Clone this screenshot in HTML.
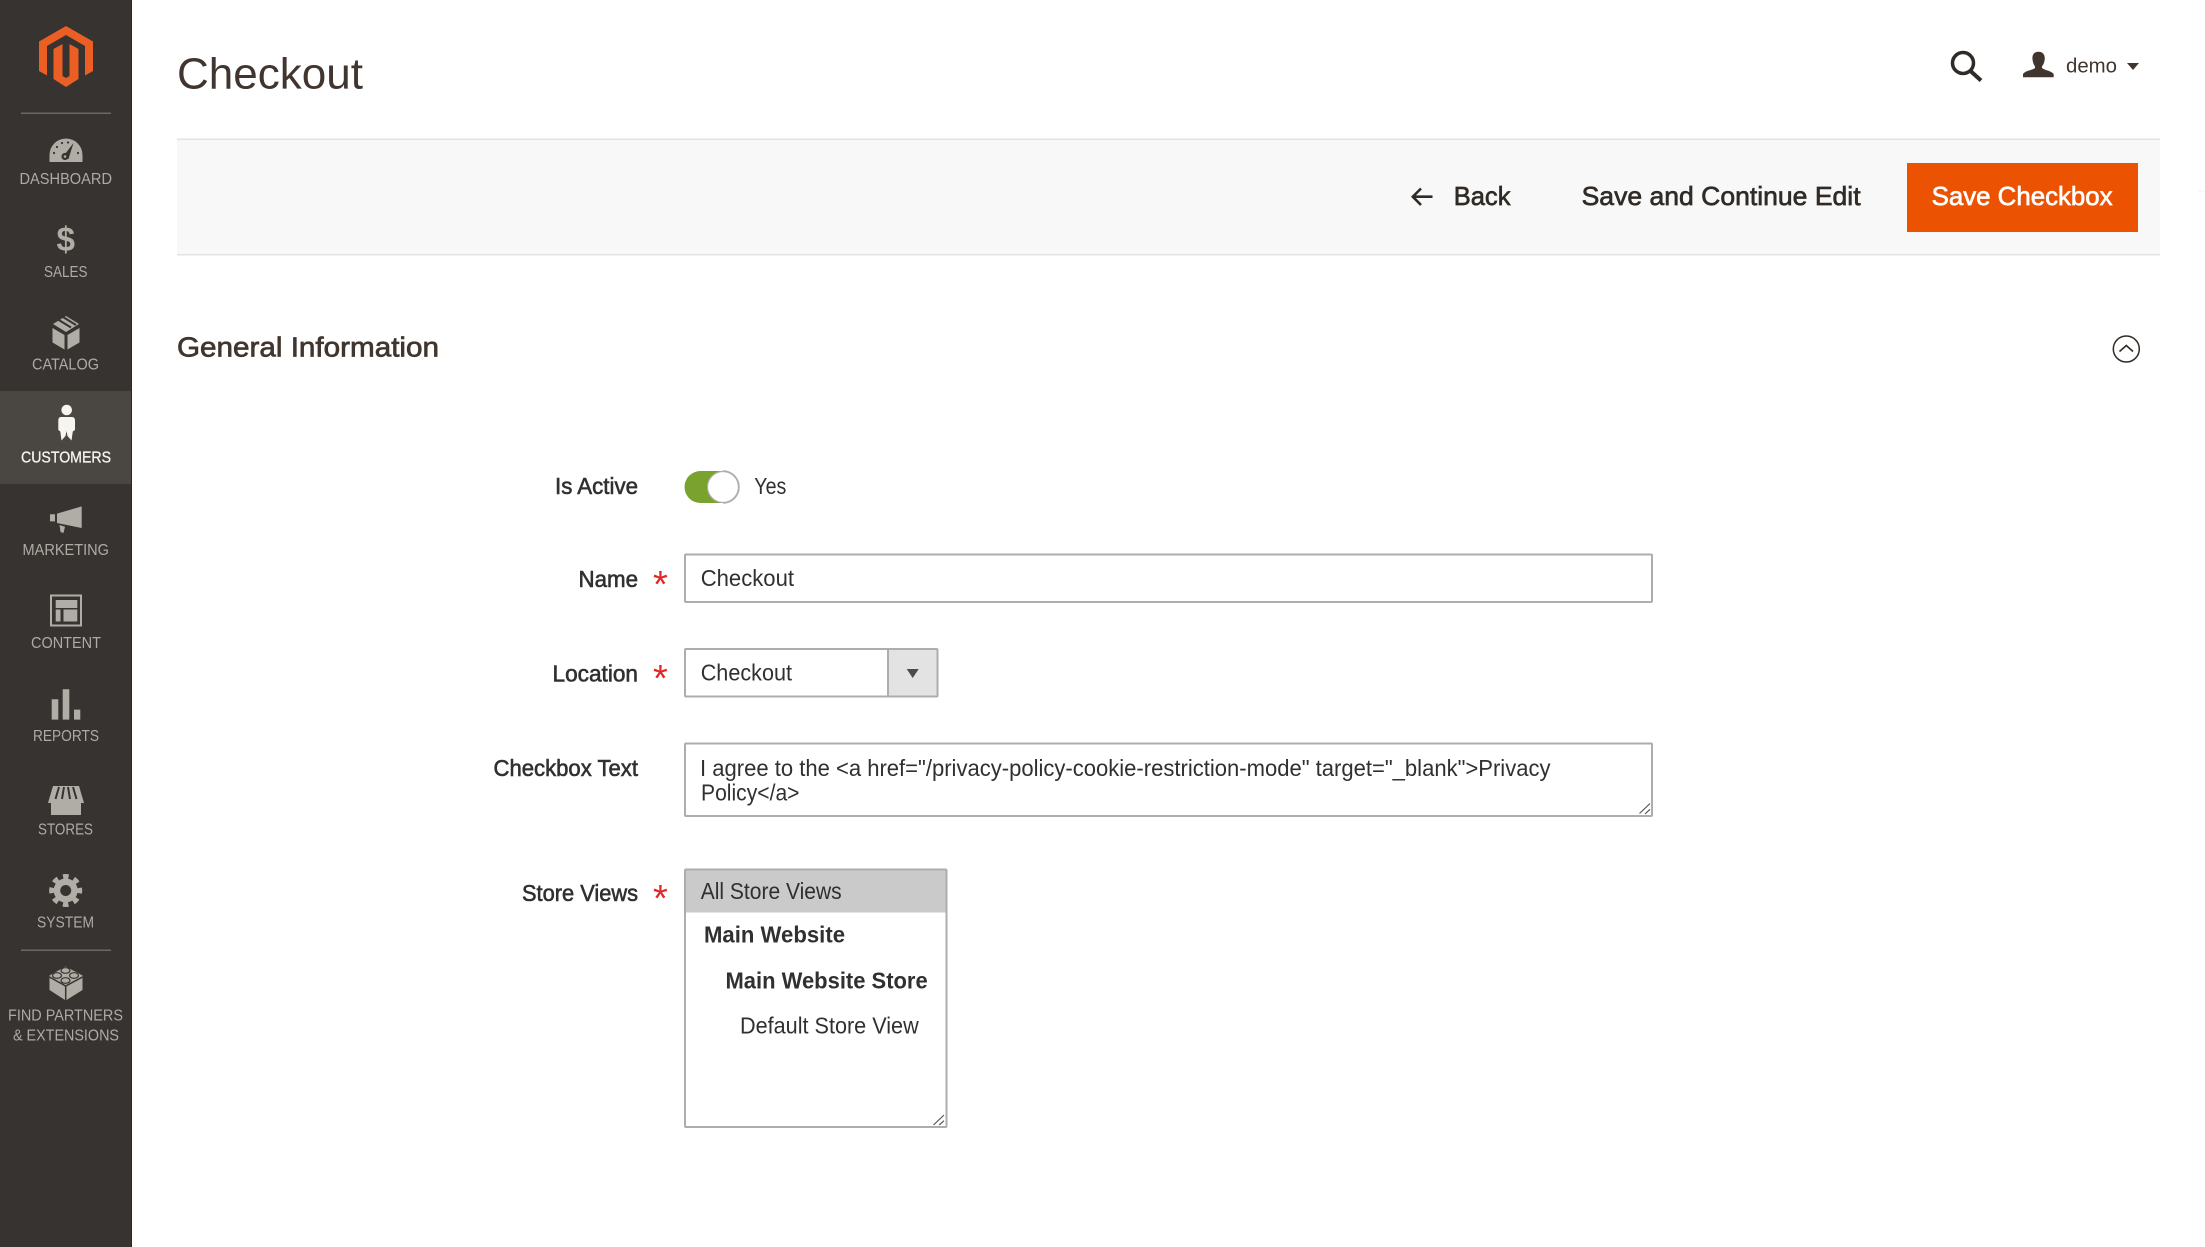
<!DOCTYPE html>
<html lang="en"><head><meta charset="utf-8"><title>Checkout</title>
<style>
html,body{margin:0;padding:0;background:#fff;width:2205px;height:1247px;overflow:hidden}
svg{display:block}
text{font-family:"Liberation Sans",sans-serif;white-space:pre}
.nav{font-size:15.5px;fill:#aeaaa4}
.lab{font-size:23px;fill:#303030;stroke:#303030;stroke-width:.6px}
.val{font-size:23px;fill:#303030}
.b{font-size:23px;font-weight:bold;fill:#303030}
.star{font-size:38px;fill:#e22626}
.tb{font-size:26px;fill:#302b26;stroke:#302b26;stroke-width:.65px}
.ic{fill:#b0ada6}
</style></head><body>
<svg width="2205" height="1247" viewBox="0 0 2205 1247" xmlns="http://www.w3.org/2000/svg">
<rect width="2205" height="1247" fill="#fff"/>
<!-- sidebar -->
<rect width="131" height="1247" fill="#373330"/>
<rect x="131" width="1" height="1247" fill="#2b2825"/>
<rect y="391" width="131" height="93" fill="#4a4642"/>
<path fill="#eb5f24" d="M66 26 L93 41.5 V71 L85 75.5 V46 L66 35 L47 46 V75.5 L39 71 V41.5 Z"/>
<path fill="#eb5f24" d="M53.5 49 L62.5 44 V76 L66 78 L69.5 76 V44 L78.5 49 V79 L66 87 L53.5 79 Z"/>
<rect x="21" y="112.5" width="90" height="1.5" fill="#6b6763"/>
<rect x="21" y="949.5" width="90" height="1.5" fill="#6b6763"/>
<!-- dashboard icon -->
<path class="ic" d="M49.5 162 V155 A16.5 16.5 0 0 1 82.5 155 V162 Z"/>
<path d="M62 158 L73.5 143 L68.5 159 Z" fill="#373330"/><circle cx="65" cy="156.5" r="3.6" fill="#373330"/><circle cx="65" cy="156.5" r="1.3" fill="#b0ada6"/>
<g fill="#373330"><circle cx="54" cy="153" r="1.1"/><circle cx="57" cy="147" r="1.1"/><circle cx="62" cy="143" r="1.1"/><circle cx="68" cy="142.5" r="1.1"/><circle cx="78" cy="153" r="1.1"/></g>
<!-- sales -->
<text x="56.5" y="251" font-size="34" font-weight="bold" fill="#b0ada6" textLength="18.5" lengthAdjust="spacingAndGlyphs">$</text>
<!-- catalog -->
<path class="ic" d="M52.5 328 L64.5 335 V349.5 L52.5 342.5 Z M67.5 335 L79.5 328 V342.5 L67.5 349.5 Z M66 316 L79 324 L66 332 L53 324 Z"/>
<path d="M58 319.5 L71 327.5 M63 317 L76 325" stroke="#373330" stroke-width="2" fill="none"/>
<!-- customers -->
<circle cx="66.7" cy="410" r="5.3" fill="#f7f5f0"/>
<path fill="#f7f5f0" d="M61 417 H72 Q75 417 75 420.5 V430 L72.8 431.5 L71.5 440.5 L67.5 436 L66.5 431 L65.5 436 L61.5 440.5 L60.3 431.5 L58.3 430 V420.5 Q58.3 417 61 417 Z"/>
<!-- marketing -->
<path class="ic" d="M81.7 506.4 V528 L57 523 V513.6 Z M50 514.3 H55 V521.4 H50 Z M59.5 525 L65 526.8 L63.5 533 L60.5 532 Z"/>
<!-- content -->
<rect x="51" y="595.5" width="30" height="30" fill="none" stroke="#b0ada6" stroke-width="2"/>
<path class="ic" d="M55.7 600 H77.3 V608 H55.7 Z M55.7 609.5 H60.5 V621.5 H55.7 Z M63.5 609.5 H77.3 V621.5 H63.5 Z"/>
<!-- reports -->
<path class="ic" d="M51.7 699.3 H58.3 V719.6 H51.7 Z M62.7 689.3 H69.3 V719.6 H62.7 Z M74 709.6 H80.3 V719.6 H74 Z"/>
<!-- stores -->
<path class="ic" d="M53 786 H79 L84 803 H48 Z M51 803 H81 V815 H51 Z"/>
<path d="M59 787 L55.5 799 M64 787 L62 799 M68 787 L70 799 M73 787 L76.5 799" stroke="#373330" stroke-width="2" fill="none"/>
<!-- system -->
<circle cx="65.7" cy="890.5" r="12" class="ic"/>
<circle cx="65.7" cy="890.5" r="14" fill="none" stroke="#b0ada6" stroke-width="5" stroke-dasharray="5.5 5.5" stroke-dashoffset="2.75"/>
<circle cx="65.7" cy="890.5" r="5.5" fill="#373330"/>
<!-- lego -->
<path class="ic" d="M65.5 966.5 L82.5 975.5 V990 L66.5 1000 H65 L49.5 990 V975.5 Z"/>
<path d="M49.5 977 L65.7 986 L82.5 977 M65.7 986 V1000" stroke="#373330" stroke-width="1.5" fill="none"/>
<g fill="#b0ada6" stroke="#373330" stroke-width="1.2"><ellipse cx="65.5" cy="970.5" rx="4.5" ry="2.8"/><ellipse cx="57" cy="975.5" rx="4.5" ry="2.8"/><ellipse cx="74" cy="975.5" rx="4.5" ry="2.8"/><ellipse cx="65.5" cy="980.5" rx="4.5" ry="2.8"/></g>
<!-- nav labels -->
<text class="nav" x="19.5" y="184" textLength="92.5" lengthAdjust="spacingAndGlyphs">DASHBOARD</text>
<text class="nav" x="44" y="277" textLength="43.5" lengthAdjust="spacingAndGlyphs">SALES</text>
<text class="nav" x="32" y="369.5" textLength="67" lengthAdjust="spacingAndGlyphs">CATALOG</text>
<text class="nav" x="21" y="462.5" textLength="90" lengthAdjust="spacingAndGlyphs" style="fill:#f7f5f0;stroke:#f7f5f0;stroke-width:.3px">CUSTOMERS</text>
<text class="nav" x="22.5" y="555" textLength="86.5" lengthAdjust="spacingAndGlyphs">MARKETING</text>
<text class="nav" x="31" y="648" textLength="70" lengthAdjust="spacingAndGlyphs">CONTENT</text>
<text class="nav" x="33" y="741" textLength="66" lengthAdjust="spacingAndGlyphs">REPORTS</text>
<text class="nav" x="38" y="834.5" textLength="55" lengthAdjust="spacingAndGlyphs">STORES</text>
<text class="nav" x="37" y="927.5" textLength="57" lengthAdjust="spacingAndGlyphs">SYSTEM</text>
<text class="nav" x="8" y="1020.5" textLength="115" lengthAdjust="spacingAndGlyphs">FIND PARTNERS</text>
<text class="nav" x="13" y="1040.5" textLength="106" lengthAdjust="spacingAndGlyphs">&amp; EXTENSIONS</text>
<!-- header -->
<text x="177" y="88.5" font-size="44" fill="#41362f" textLength="186" lengthAdjust="spacingAndGlyphs">Checkout</text>
<circle cx="1963" cy="63" r="10.5" fill="none" stroke="#302b26" stroke-width="3.5"/>
<path d="M1970.5 71 L1981 80.5" stroke="#302b26" stroke-width="4" fill="none"/>
<path fill="#41362f" d="M2038.5 51.7 C2033.5 51.7 2032 55.5 2032.5 59.5 C2033 63 2034 65 2035 66.5 V68 C2032 70.5 2025.5 70.5 2023 74 V77.3 H2053.7 V74 C2051 70.5 2045 70.5 2042 68 V66.5 C2043 65 2044.3 63 2044.7 59.5 C2045.2 55.5 2043.5 51.7 2038.5 51.7 Z"/>
<text x="2066" y="72.7" font-size="20" fill="#41362f" textLength="51" lengthAdjust="spacingAndGlyphs">demo</text>
<path fill="#41362f" d="M2127 63 H2139 L2133 70 Z"/>
<!-- toolbar -->
<rect x="177" y="139" width="1983" height="116" fill="#f8f8f8"/>
<rect x="177" y="138.5" width="1983" height="1.5" fill="#e3e3e3"/>
<rect x="177" y="254" width="1983" height="1.5" fill="#e3e3e3"/>
<rect x="2198" y="190.5" width="7" height="1" fill="#f0f0f0"/>
<path d="M1432.5 196.7 H1413 M1421 188.5 L1412.8 196.7 L1421 205" stroke="#302b26" stroke-width="2.6" fill="none"/>
<text class="tb" x="1453.7" y="205" textLength="56.8" lengthAdjust="spacingAndGlyphs">Back</text>
<text class="tb" x="1581.6" y="205" textLength="279" lengthAdjust="spacingAndGlyphs">Save and Continue Edit</text>
<rect x="1907" y="163" width="231" height="69" fill="#eb5202"/>
<text class="tb" x="1931.6" y="205" textLength="181" lengthAdjust="spacingAndGlyphs" style="fill:#fff;stroke:#fff">Save Checkbox</text>
<!-- section -->
<text x="177" y="356.5" font-size="27.5" fill="#41362f" stroke="#41362f" stroke-width=".7" textLength="262" lengthAdjust="spacingAndGlyphs">General Information</text>
<circle cx="2126.3" cy="349" r="13" fill="#fff" stroke="#302b26" stroke-width="1.5"/>
<path d="M2119.5 351.5 L2126.3 345.5 L2133 351.5" fill="none" stroke="#302b26" stroke-width="1.6"/>
<!-- form -->
<text class="lab" x="555" y="494" textLength="83" lengthAdjust="spacingAndGlyphs">Is Active</text>
<rect x="684.5" y="471" width="55" height="32" rx="16" fill="#79a22e"/>
<circle cx="723" cy="487" r="15.5" fill="#fff" stroke="#adadad" stroke-width="1.2"/>
<path d="M723 471 A16 16 0 0 1 723 503" fill="none" stroke="#adadad" stroke-width="1.5"/>
<text class="val" x="754.3" y="494" textLength="32" lengthAdjust="spacingAndGlyphs">Yes</text>

<text class="lab" x="578.5" y="587" textLength="59.5" lengthAdjust="spacingAndGlyphs">Name</text>
<text class="star" x="653" y="597">*</text>
<rect x="685" y="554.5" width="967" height="47.5" rx="1" fill="#fff" stroke="#adadad" stroke-width="2"/>
<text class="val" x="700.7" y="586" textLength="93.3" lengthAdjust="spacingAndGlyphs">Checkout</text>

<text class="lab" x="552.5" y="681.7" textLength="85.5" lengthAdjust="spacingAndGlyphs">Location</text>
<text class="star" x="653" y="691">*</text>
<rect x="888" y="649" width="49" height="47" fill="#e3e3e3"/>
<rect x="685" y="649" width="252.5" height="47.5" rx="1" fill="none" stroke="#adadad" stroke-width="2"/>
<rect x="887" y="649" width="2" height="47" fill="#adadad"/>
<path fill="#514943" d="M906.7 669 H918.7 L912.7 678 Z"/>
<text class="val" x="700.7" y="680.7" textLength="91.3" lengthAdjust="spacingAndGlyphs">Checkout</text>

<text class="lab" x="493.5" y="776" textLength="144.5" lengthAdjust="spacingAndGlyphs">Checkbox Text</text>
<rect x="685" y="743.5" width="967" height="72.5" rx="1" fill="#fff" stroke="#adadad" stroke-width="2"/>
<text class="val" x="700" y="776" textLength="850.5" lengthAdjust="spacingAndGlyphs">I agree to the &lt;a href="/privacy-policy-cookie-restriction-mode" target="_blank"&gt;Privacy</text>
<text class="val" x="701" y="800.7" textLength="98.5" lengthAdjust="spacingAndGlyphs">Policy&lt;/a&gt;</text>
<path d="M1639.5 813.5 L1650 803.5 M1645 814 L1650 809.3" stroke="#555" stroke-width="1.2" fill="none"/>

<text class="lab" x="522" y="901" textLength="116" lengthAdjust="spacingAndGlyphs">Store Views</text>
<text class="star" x="653" y="911">*</text>
<rect x="685" y="869.5" width="261.5" height="257.5" rx="1" fill="#fff" stroke="#adadad" stroke-width="2"/>
<rect x="686" y="870.5" width="259.5" height="42" fill="#cacaca"/>
<text class="val" x="700.7" y="899" textLength="141" lengthAdjust="spacingAndGlyphs">All Store Views</text>
<text class="b" x="704" y="942.3" textLength="141" lengthAdjust="spacingAndGlyphs">Main Website</text>
<text class="b" x="725.5" y="988.3" textLength="202.2" lengthAdjust="spacingAndGlyphs">Main Website Store</text>
<text class="val" x="740" y="1033.3" textLength="178.7" lengthAdjust="spacingAndGlyphs">Default Store View</text>
<path d="M933.5 1125 L944 1115 M939.3 1125 L944 1120.7" stroke="#555" stroke-width="1.2" fill="none"/>
</svg>
</body></html>
